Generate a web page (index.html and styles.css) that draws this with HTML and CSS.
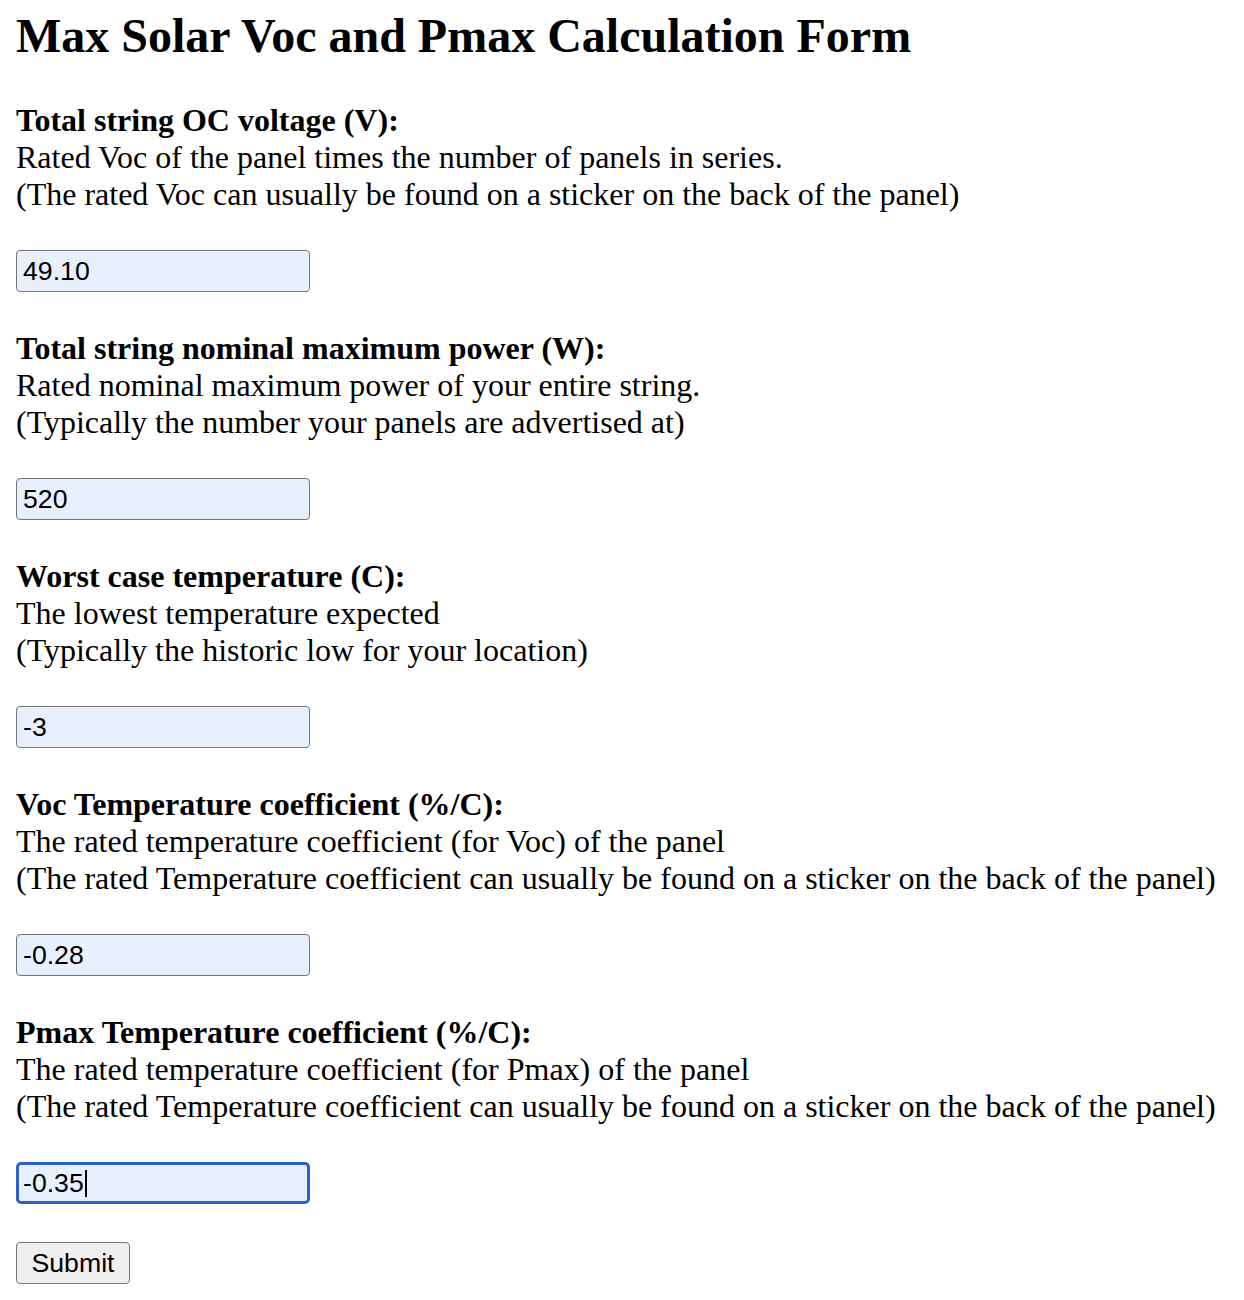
FILE: index.html
```html
<!DOCTYPE html>
<html lang="en">
<head>
    <meta charset="utf-8">
    <title>Max Solar Voc and Pmax Calculation Form</title>
    <link rel="stylesheet" href="styles.css">
</head>
<body>
    <h1>Max Solar Voc and Pmax Calculation Form</h1>

    <form class="calc" id="calc">
        <div class="field">
            <label for="voc"><b>Total string OC voltage (V):</b></label>
            <p class="hint">Rated Voc of the panel times the number of panels in series.<br>(The rated Voc can usually be found on a sticker on the back of the panel)</p>
            <input type="text" id="voc" name="voc" value="49.10">
        </div>

        <div class="field">
            <label for="pmax"><b>Total string nominal maximum power (W):</b></label>
            <p class="hint">Rated nominal maximum power of your entire string.<br>(Typically the number your panels are advertised at)</p>
            <input type="text" id="pmax" name="pmax" value="520">
        </div>

        <div class="field">
            <label for="temp"><b>Worst case temperature (C):</b></label>
            <p class="hint">The lowest temperature expected<br>(Typically the historic low for your location)</p>
            <input type="text" id="temp" name="temp" value="-3">
        </div>

        <div class="field">
            <label for="vcoef"><b>Voc Temperature coefficient (%/C):</b></label>
            <p class="hint">The rated temperature coefficient (for Voc) of the panel<br>(The rated Temperature coefficient can usually be found on a sticker on the back of the panel)</p>
            <input type="text" id="vcoef" name="vcoef" value="-0.28">
        </div>

        <div class="field">
            <label for="pcoef"><b>Pmax Temperature coefficient (%/C):</b></label>
            <p class="hint">The rated temperature coefficient (for Pmax) of the panel<br>(The rated Temperature coefficient can usually be found on a sticker on the back of the panel)</p>
            <div class="box">
                <input type="text" class="act" id="pcoef" name="pcoef" value="-0.35">
                <span class="caret"></span>
            </div>
        </div>

        <button type="submit" class="btn">Submit</button>
    </form>
</body>
</html>
```

FILE: styles.css
```css
/* Base */
html, body {
    background: #fff;
    color: #000;
}

body {
    margin: 0 16px;
    font-family: "Liberation Serif", "Times New Roman", serif;
    font-size: 32px;
    line-height: 37px;
}

h1 {
    font-size: 48px;
    line-height: 55px;
    margin: 8px 0 39px;
}

/* Form */
.field {
    padding-bottom: 38px;
}

.field label {
    display: block;
}

.hint {
    margin: 0 0 37px;
}

.field input {
    display: block;
    box-sizing: border-box;
    width: 294px;
    height: 42px;
    margin: 0;
    padding: 0 6px;
    border: 1px solid #767676;
    border-radius: 4px;
    background: #e8f0fe;
    color: #000;
    font-family: "Liberation Sans", Arial, sans-serif;
    font-size: 26.67px;
    outline: none;
}

.field input.act {
    border: 3px solid #2b62c9;
    border-radius: 5px;
    padding: 0 4px;
}

/* Caret drawn over the focused field */
.box {
    position: relative;
    width: 294px;
}

.caret {
    position: absolute;
    left: 69px;
    top: 8px;
    width: 2px;
    height: 27px;
    background: #000;
}

.btn {
    box-sizing: border-box;
    width: 114px;
    height: 42px;
    padding: 0;
    border: 1px solid #767676;
    border-radius: 4px;
    background: #efefef;
    color: #000;
    font-family: "Liberation Sans", Arial, sans-serif;
    font-size: 26.67px;
}
```
